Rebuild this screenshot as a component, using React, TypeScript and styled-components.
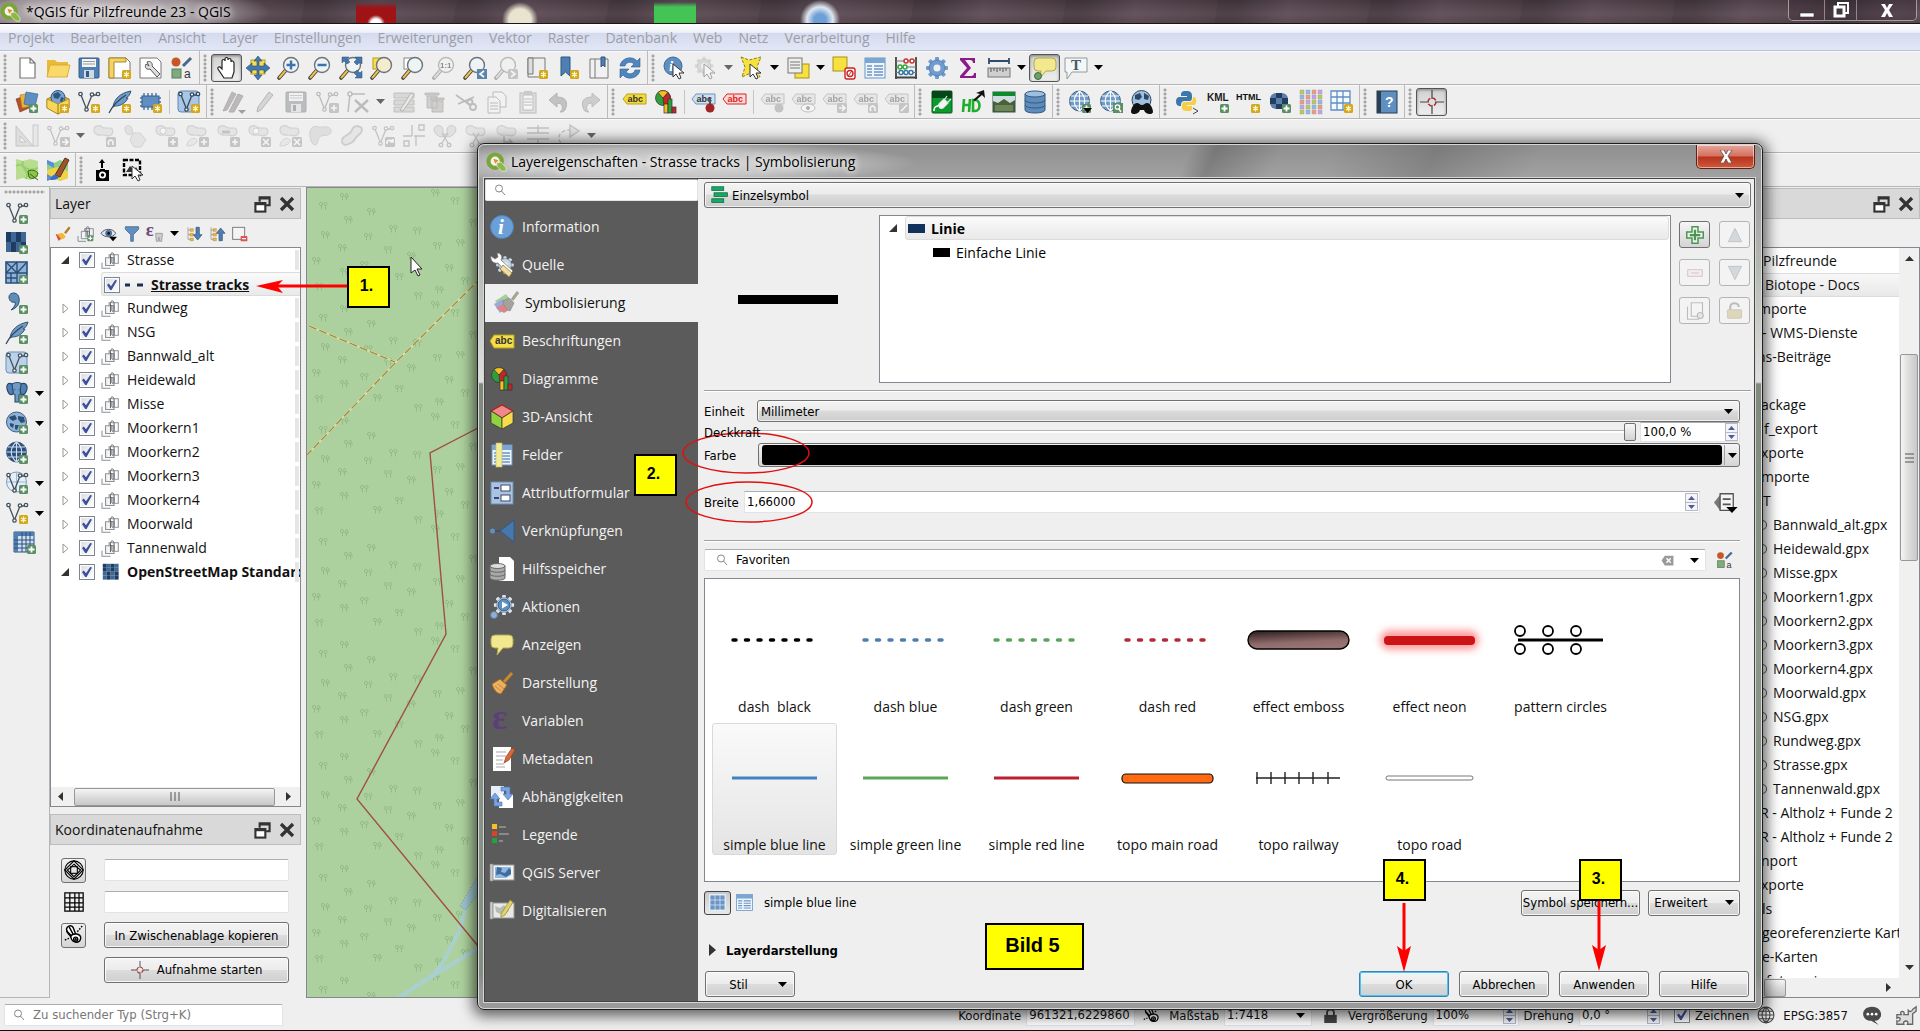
import React, { ReactNode } from 'react';
import styled, { createGlobalStyle, css } from 'styled-components';

const UI = '"Open Sans", "Noto Sans", sans-serif';
const CTRL = '"DejaVu Sans Condensed", "Noto Sans", sans-serif';
const NOTE = '"Liberation Sans", Arial, sans-serif';

const Global = createGlobalStyle`
  * { box-sizing: border-box; }
  body { margin: 0; background: #efefef; font-family: ${UI}; font-size: 14px; color: #111; overflow: hidden; }
  button, input, select { font: inherit; color: inherit; margin: 0; }
  svg { display: block; flex: none; }
`;

/* ---------- icon parts ---------- */
const Plus = () => (
  <g><rect x="14" y="14" width="9" height="9" rx="1.5" fill="#5a8f62" /><path d="M18.500 15.500v6M15.500 18.500h6" stroke="#fff" strokeWidth="1.800" /></g>
);
const Star = () => (
  <g><rect x="14" y="14" width="9" height="9" rx="1.500" fill="#d3a71c" /><path d="M18.500 15.500v6M16 17l5 3M21 17l-5 3" stroke="#fff8d0" strokeWidth="1.300" /></g>
);
const Nodes = ({ c = '#44525c' }: { c?: string }) => (
  <g fill="none" stroke={c} strokeWidth="1.300"><path d="M4 5l5.500 14L15 5h6" /><circle cx="3.500" cy="4" r="1.700" fill="#fff" /><circle cx="15" cy="4.500" r="1.700" fill="#fff" /><circle cx="21" cy="4" r="1.700" fill="#fff" /><circle cx="9.500" cy="19.500" r="1.700" fill="#fff" /></g>
);
const Lens = ({ fill = '#eef3f6' }: { fill?: string }) => (
  <g><path d="M2 22l7-8" stroke="#3b3b3b" strokeWidth="3.600" strokeLinecap="round" /><path d="M2.500 21.500l6-7" stroke="#f0c24a" strokeWidth="2" strokeLinecap="round" /><circle cx="14" cy="9" r="7.500" fill={fill} stroke="#6d7478" strokeWidth="1.400" /></g>
);
const Ball = ({ fill = '#6f9bc6', line = '#fff' }: { fill?: string; line?: string }) => (
  <g><circle cx="11.500" cy="11" r="10" fill={fill} stroke="#3f5e7e" strokeWidth="1" /><path d="M1.500 11h20M3 6h17M3 16h17M11.500 1v20M11.500 1c-7 6-7 14 0 20M11.500 1c7 6 7 14 0 20" fill="none" stroke={line} strokeWidth="1.100" /></g>
);
const Drop = () => <path d="M15 18h9l-4.500 5z" fill="#000" />;
const Blob = () => <path d="M2 6c0-5 6-5 8-3s5 1 8 1 4 5 1 7-6 0-8 0-9 1-9-5z" fill="#d6d6d4" stroke="#a9a9a7" strokeWidth="1.200" />;
const Tag = ({ bg = '#f4d93a', st = '#b9a11a', fg = '#333' }: { bg?: string; st?: string; fg?: string }) => (
  <g><path d="M0 9l4-5h19v10H4z" fill={bg} stroke={st} strokeWidth="1" /><text x="4.500" y="12" fontSize="9" fontWeight="700" fontFamily={NOTE} fill={fg}>abc</text></g>
);
const GreyBadge = ({ d }: { d: string }) => (
  <g><rect x="14" y="13" width="10" height="10" rx="1.500" fill="#8d8d8d" /><path d={d} stroke="#fff" strokeWidth="1.600" fill="none" /></g>
);
const Feather = () => (
  <g><path d="M5 17C6 9 12 3 23 1c-1 4-3 6-5 7l2 0c-2 4-6 8-13 8z" fill="#6f9bc6" stroke="#365472" strokeWidth="1" /><path d="M1 23c4-8 9-13 17-18" fill="none" stroke="#2c4560" strokeWidth="1.200" /></g>
);
const Save = () => (
  <g><rect x="2" y="2" width="20" height="20" rx="1" fill="#4d7fb3" stroke="#365c86" /><rect x="5" y="3" width="14" height="8" fill="#f4f4f4" /><path d="M6 5.500h12M6 8h12" stroke="#999" /><rect x="7" y="14" width="10" height="8" fill="#cfd9e2" /><rect x="9" y="15" width="3" height="6" fill="#365c86" /></g>
);
const Page = () => <path d="M5 2h10l5 5v15H5zM15 2v5h5" fill="#fff" stroke="#777" strokeWidth="1.200" />;
const Trash = () => <path d="M2 3h14v2H2zM4 6h10v12H4zM8 8h13v2H8zM9 11h11v11H9z" fill="#c89a9a" stroke="#8b5a5a" strokeWidth=".8" />;
const Snips = () => <g fill="none" stroke="#888" strokeWidth="1.400"><path d="M9 9l6 10M15 9L9 19" /><circle cx="8" cy="21" r="1.800" /><circle cx="16" cy="21" r="1.800" /></g>;
const Style = () => (
  <g><circle cx="6" cy="6" r="4.500" fill="#c8562a" /><path d="M13 10l8-8" stroke="#47698b" strokeWidth="3" /><rect x="2" y="13" width="9" height="9" fill="#7fa97f" stroke="#568156" /><text x="14" y="22" fontSize="12" fontFamily={NOTE} fill="#333">a</text></g>
);
const Table = () => (
  <g><rect x="2" y="2" width="20" height="20" fill="#eef5fc" stroke="#6b95c4" /><rect x="2" y="2" width="20" height="5" fill="#7ba6d4" /><path d="M4 10h5M4 13h5M4 16h5M4 19h5M11 10h9M11 13h9M11 16h9M11 19h9" stroke="#6b95c4" strokeWidth="1.400" /></g>
);
const GroupIcon = () => (
  <g fill="none" stroke="#8d9296" strokeWidth="1.500"><path d="M0 15v8h12M4 19" /><path d="M5 8v11h12V8z" fill="#f3f3f3" /><path d="M10 8V4h13v12h-6" /><path d="M12 17V5c0-5 5-5 5 0v9c0 3-3 3-3 0V7" stroke="#555b60" strokeWidth="1.300" /></g>
);
const Check = () => (
  <g>{[0, 1, 2, 3].map((r) => [0, 1, 2, 3].map((c) => <rect key={r + '-' + c} x={1 + c * 5} y={1 + r * 5} width="5" height="5" fill={['#1d3d63', '#9fbfe0', '#3f6796', '#dfe9f4'][(r * 3 + c * 2 + (r % 2)) % 4]} />))}</g>
);
const Pie = () => (
  <g stroke="#333" strokeWidth=".7"><circle cx="9" cy="8" r="7.500" fill="#2f9e3a" /><path d="M9 8L4 2.500a7.500 7.500 0 0 1 10 0z" fill="#f6c022" /><path d="M9 8l5-5.500a7.500 7.500 0 0 1-4 13z" fill="#c4252a" /><rect x="10" y="14" width="4" height="9" fill="#f6c022" /><rect x="14" y="9" width="4" height="14" fill="#2f9e3a" /><rect x="18" y="17" width="4" height="6" fill="#c4252a" /></g>
);
const Gear = ({ fill = '#6f9bd0', x = 12, y = 12, k = 1 }: { fill?: string; x?: number; y?: number; k?: number }) => (
  <g transform={`translate(${x} ${y}) scale(${k})`}>
    {[0, 45, 90, 135].map((a) => <rect key={a} x="-2" y="-11" width="4" height="22" rx="1" fill={fill} transform={`rotate(${a})`} />)}
    <circle r="8" fill={fill} stroke="#4c6f9c" strokeWidth=".6" /><circle r="3.500" fill="#efefef" />
  </g>
);
const Bubble = () => <path d="M5 2h14q4 0 4 4v5q0 4-4 4h-6l-6 7 1-7H5q-4 0-4-4V6q0-4 4-4z" fill="#f2e88f" stroke="#b3a84c" />;
const Cross = ({ c = '#b03030' }: { c?: string }) => (
  <g fill="none"><path d="M12 0v9M12 15v9M0 12h9M15 12h9" stroke="#444" strokeWidth="1.200" /><circle cx="12" cy="12" r="4" stroke={c} strokeWidth="1.600" strokeDasharray="4 2.280" /></g>
);
const Pointer = () => <path d="M10 8v13l3-3 3 5 2-1-2-5h5z" fill="#fff" stroke="#333" />;
const Elephant = () => (
  <g stroke="#28476a" strokeWidth="1.100" fill="#6f9bc6"><path d="M7 3c3-2 8-2 10 0 3 3 2 8-1 10l-2 1v7h-4v-7C6 12 4 6 7 3z" /><path d="M7 3C3 1 1 4 2 8s3 7 6 5c1-3-1-6-1-10zM16 3c4-2 7 1 6 5s-3 7-6 5c-2-3 0-6 0-10z" fill="#4f7fb3" /><path d="M10 8v.5M14 8v.5" strokeWidth="1.600" /></g>
);

const ICONS: Record<string, ReactNode> = {
  new: <Page />,
  open: <g><path d="M1 4h8l2 2h11v15H1z" fill="#e9b93a" /><path d="M1 21L4 9h20l-3 12z" fill="#f8d96a" stroke="#d5a52c" strokeWidth=".8" /></g>,
  save: <Save />,
  layout: <g><path d="M1 2h17l4 4v16H1z" fill="#fff" stroke="#777" /><path d="M1 2h17v4H6v16H1z" fill="#f4d263" stroke="#a98a25" /><Star /></g>,
  manager: <g><path d="M1 2h17l4 4v16H1z" fill="#fff" stroke="#777" /><path d="M8 6c4-2 6 2 5 4l8 8-3 3-7-8c-3 1-6-1-4-5l3 2z" fill="#ddd" stroke="#555" /></g>,
  style: <Style />,
  hand: <path d="M7 13V5c0-2 3-2 3 0V3c0-2 3-2 3 0v1c0-2 3-2 3 0v2c0-2 3-1 3 1v9l-2 6H9l-6-9c-1-2 2-3 3-1z" fill="#fff" stroke="#222" strokeWidth="1.200" />,
  pan: <g><rect x="5" y="4" width="14" height="14" fill="#f6df4f" stroke="#b49c1e" /><path d="M12 0l4 5h-3v5h5V7l6 5-6 5v-3h-5v5h3l-4 5-4-5h3v-5H6v3l-6-5 6-5v3h5V5H8z" fill="#4577ab" stroke="#2a4f78" strokeWidth=".6" /></g>,
  zin: <g><Lens /><path d="M14 4.500v9M9.500 9h9" stroke="#3d73ab" strokeWidth="2.500" /></g>,
  zout: <g><Lens /><path d="M9.500 9h9" stroke="#3d73ab" strokeWidth="2.500" /></g>,
  zfull: <g><Lens /><path d="M3 1h7L8 3l3 3-3 2-3-3-2 2zM23 1v7l-2-2-3 3-3-3 3-3-2-2zM23 22h-7l2-2-3-3 3-3 3 3 2-2z" fill="#4577ab" stroke="#2a4f78" strokeWidth=".5" /></g>,
  zsel: <g><rect x="3" y="2" width="12" height="11" fill="#f6df4f" stroke="#b49c1e" /><Lens fill="#f3ecd0" /></g>,
  zlayer: <g><rect x="3" y="2" width="12" height="11" fill="#fff" stroke="#888" /><Lens /></g>,
  z11: <g><Lens /><text x="8" y="12" fontSize="8" fontWeight="700" fontFamily={NOTE}>1:1</text></g>,
  zlast: <g><Lens /><rect x="14" y="13" width="10" height="10" fill="#5b86ab" /><path d="M21 15l-4 3 4 3" stroke="#fff" strokeWidth="1.600" fill="none" /></g>,
  znext: <g><Lens /><GreyBadge d="M17 15l4 3-4 3" /></g>,
  newmap: <g><path d="M3 2h17v19H3z" fill="#eee" stroke="#777" /><path d="M3 2h5v16H3z" fill="#ddd" stroke="#777" /><Star /></g>,
  bookmark: <g><path d="M5 1h9v19l-4.500-4L5 20z" fill="#4d7fb3" stroke="#2f567f" /><Star /></g>,
  bookmarks: <g><path d="M3 3h18v19H3z" fill="#f1f1f1" stroke="#777" /><path d="M14 1v10l2-2 2 2V1z" fill="#4d7fb3" stroke="#2f567f" /><path d="M8 3v19" stroke="#777" /></g>,
  refresh: <g fill="#4f86c0" stroke="#2d5d90" strokeWidth=".6"><path d="M2 10C3 2 14-1 19 5l3-3v9h-9l3-3c-3-3-8-2-9 2z" /><path d="M22 14c-1 8-12 11-17 5l-3 3v-9h9l-3 3c3 3 8 2 9-2z" /></g>,
  identify: <g><circle cx="10" cy="10" r="9" fill="#5e8fc0" stroke="#3d6a99" /><text x="6" y="15" fontSize="15" fontStyle="italic" fontWeight="700" fontFamily='"Liberation Serif", serif' fill="#fff">i</text><Pointer /></g>,
  action: <g><Gear fill="#bbb" x={10} y={10} k={0.85} /><Pointer /></g>,
  select: <g><path d="M1 1l8 3 12-3-4 10 3 10-9-4-9 4 3-10z" fill="#f6e13f" stroke="#8c7c18" strokeDasharray="3 1.500" /><Pointer /></g>,
  form: <g><rect x="9" y="8" width="14" height="14" fill="#f6e13f" stroke="#a7931c" /><rect x="2" y="2" width="14" height="15" fill="#eee" stroke="#777" /><path d="M4 6h10M4 9h10M4 12h10" stroke="#777" /></g>,
  deselect: <g><rect x="1" y="1" width="14" height="14" fill="#f6e13f" stroke="#a7931c" /><rect x="13" y="12" width="10" height="11" rx="2" fill="#fff" stroke="#c22" strokeWidth="1.400" /><circle cx="18" cy="17.500" r="3" fill="none" stroke="#c22" strokeWidth="1.400" /><path d="M16 20l4-5" stroke="#c22" /></g>,
  table: <Table />,
  abacus: <g fill="none"><path d="M2 1v22M22 1v22M1 21.500h22" stroke="#444" strokeWidth="1.800" /><path d="M2 5h20M2 11h20M2 16.500h20" stroke="#777" /><g strokeWidth="1.500" fill="#fff"><circle cx="12" cy="5" r="2" stroke="#c33" /><circle cx="18" cy="5" r="2" stroke="#c33" /><circle cx="6" cy="11" r="2" stroke="#3a3" /><circle cx="11" cy="11" r="2" stroke="#3a3" /><circle cx="7" cy="16.500" r="2" stroke="#37a" /><circle cx="12" cy="16.500" r="2" stroke="#37a" /><circle cx="17" cy="16.500" r="2" stroke="#37a" /></g></g>,
  gear: <Gear />,
  sigma: <path d="M4 2h15v5h-2c0-2-1-3-3-3H9l6 8-7 8h7c2 0 3-1 3-3h2v5H4v-2l7-8-7-8z" fill="#8b1a8b" />,
  ruler: <g><path d="M2 5h20M2 2v6M22 2v6" stroke="#2f4c6d" strokeWidth="1.800" /><rect x="1" y="12" width="22" height="9" fill="#cfcfcf" stroke="#777" /><path d="M4 12v4M7 12v3M10 12v4M13 12v3M16 12v4M19 12v3" stroke="#555" /></g>,
  tips: <g><Bubble /><circle cx="5" cy="20" r="3.500" fill="#6fa06a" stroke="#3e6c3a" /></g>,
  text: <g><path d="M1 2h22v14H8l-5 7V16H1z" fill="#f4f7f8" stroke="#909a9e" /><text x="7" y="14" fontSize="15" fontWeight="700" fontFamily='"Liberation Serif", serif' fill="#4b5a64">T</text></g>,
  dsm: <g><path d="M1 9l9-3 4 12-9 4z" fill="#b3502d" stroke="#7a341b" strokeWidth=".6" /><path d="M5 5l11-2 1 13-10 2z" fill="#e8b33a" stroke="#a57a1c" strokeWidth=".6" /><path d="M11 2l12 2-3 13-11-3z" fill="#5f8fc2" stroke="#365c86" strokeWidth=".6" /><Plus /></g>,
  geopkg: <g><path d="M1 9l11-5 11 5v9l-11 6-11-6z" fill="#e3b92f" stroke="#a7831c" /><circle cx="12" cy="7.500" r="7" fill="#7aa3cf" stroke="#2f567f" /><path d="M7 4l5-2 3 3-3 4-4-1zM15 7l3 1-2 5-2-2z" fill="#2f567f" /><path d="M1 9l11 5v10L1 18zM23 9l-11 5v10l11-6z" fill="#f6d75c" stroke="#a7831c" strokeWidth=".7" /><Star /></g>,
  newshape: <g><Nodes /><Star /></g>,
  newspat: <g><Feather /><Star /></g>,
  mem: <g><path d="M5 3v17M9 3v17M13 3v17M17 3v17M1 8h21M1 12h21M1 16h21" stroke="#4675a6" strokeWidth="1.400" /><rect x="3" y="6" width="17" height="11" fill="#5f8fc2" stroke="#365c86" /><Star /></g>,
  virt: <g><rect x="1" y="1" width="21" height="21" rx="3" fill="#a9c6e6" stroke="#5f87b0" /><Nodes c="#33485c" /><Star /></g>,
  pencils: <g><path d="M1 21L10 2l4 2L5 20zM7 22l9-18 5 2-9 16z" fill="#8a6a64" stroke="#6b544e" /><path d="M16 20h8l-4 4z" fill="#333" /></g>,
  pencil: <path d="M4 22l1-5L16 2l4 3L8 20z" fill="#b9b39c" stroke="#6d6752" />,
  vplus: <g><Nodes c="#777" /><GreyBadge d="M19 15v6M16 18h6" /></g>,
  vtool: <g fill="none" stroke="#777" strokeWidth="1.500"><path d="M4 4h15M4 4l-2 18" /><path d="M9 10l13 12M22 10L9 22" strokeWidth="2.400" /><circle cx="4" cy="4" r="2" fill="#fff" /></g>,
  multi: <g><path d="M2 3h20v5H2zM2 10h20v5H2zM2 17h20v5H2z" fill="#b5bda2" stroke="#7d8567" /><path d="M8 20L19 3l3 2L11 21z" fill="#ddd" stroke="#666" /></g>,
  trash: <Trash />,
  cut: <g fill="none" stroke="#777" strokeWidth="1.800"><path d="M2 5l14 10M4 14L20 7" /><circle cx="19" cy="17" r="3" /><circle cx="16" cy="12" r="2.500" /></g>,
  copy: <g fill="#f5f5f5" stroke="#777"><path d="M8 2h9l4 4v11H8z" /><path d="M3 7h8l4 4v12H3z" /><path d="M5 13h8M5 16h8M5 19h8" /></g>,
  paste: <g><rect x="4" y="3" width="16" height="20" fill="#ccc" stroke="#777" /><path d="M7 5h10v15H7z" fill="#fff" stroke="#777" /><rect x="8" y="1" width="8" height="4" fill="#999" /><path d="M8 9h8M8 12h8M8 15h8" stroke="#777" /></g>,
  undo: <path d="M2 10l8-7v4c8 0 12 4 8 13-1 2-4 2-5 2 4-3 3-9-3-9v4z" fill="#a5806f" stroke="#7a5d50" />,
  redo: <path d="M22 10l-8-7v4C6 7 2 11 6 20c1 2 4 2 5 2-4-3-3-9 3-9v4z" fill="#8fa68f" stroke="#657a65" />,
  label: <Tag />,
  diagram: <Pie />,
  pinlabel: <g><Tag bg="#cfe0f3" st="#6d92bd" /><path d="M18 8v7" stroke="#555" strokeWidth="2" /><circle cx="18" cy="18" r="4.500" fill="#a32424" /></g>,
  redlabel: <Tag bg="#fbdada" st="#e02020" fg="#e02020" />,
  gl1: <g><Tag bg="#ddd" st="#888" /><circle cx="18" cy="18" r="4.500" fill="#888" /></g>,
  gl2: <g><Tag bg="#ddd" st="#888" /><ellipse cx="16" cy="18" rx="7" ry="4" fill="#fff" stroke="#777" /><circle cx="16" cy="18" r="2" fill="#555" /></g>,
  gl3: <g><Tag bg="#ddd" st="#888" /><GreyBadge d="M16 18h6M19 15l3 3-3 3" /></g>,
  gl4: <g><Tag bg="#ddd" st="#888" /><GreyBadge d="M17 21c-3-5 4-7 4-2v2" /></g>,
  gl5: <g><Tag bg="#ddd" st="#888" /><GreyBadge d="M16 21l6-6" /></g>,
  plug: <g><rect x="2" y="1" width="20" height="22" rx="1" fill="#0c9a2c" stroke="#045a17" /><rect x="2" y="1" width="20" height="7" fill="#05471a" /><path d="M4 21c0-7 4-3 6-7" stroke="#fff" strokeWidth="1.600" fill="none" /><path d="M9 14l5-5 4 4-5 5c-3 1-5-1-4-4zM15 9l2-3M18 12l3-3" fill="#f4f4f4" stroke="#e8e8e8" strokeWidth="1.200" /></g>,
  hd: <g><path d="M3 9l-1 13M2 15h6M9 9L8 22" fill="none" stroke="#1fae2c" strokeWidth="2.600" /><path d="M12 10v11h2c6 0 6-11 0-11z" fill="none" stroke="#1fae2c" strokeWidth="2.600" /><path d="M12 10l7-6-4-1 8-3 1 8-3-3-7 6z" fill="#111" /></g>,
  photo: <g><rect x="1" y="2" width="22" height="20" fill="#4a6138" stroke="#355" /><rect x="1" y="2" width="22" height="4" fill="#0d8a2c" /><path d="M1 6h22v4l-5 3-6-4-6 4-5-2z" fill="#cfdde0" /><path d="M3 15h18v6H3z" fill="#6f8557" /></g>,
  db: <g fill="#5d8bbb" stroke="#35597f"><path d="M2 4v16c0 4 20 4 20 0V4z" /><path d="M2 10c0 4 20 4 20 0M2 15c0 4 20 4 20 0" fill="none" /><ellipse cx="12" cy="4" rx="10" ry="3" fill="#9dbfe0" /></g>,
  globeplus: <g><Ball /><Plus /><Drop /></g>,
  globesearch: <g><Ball /><rect x="14" y="13" width="10" height="10" fill="#5a8f62" /><circle cx="18.500" cy="17" r="2.200" fill="none" stroke="#fff" strokeWidth="1.300" /><path d="M20 19l2 3" stroke="#fff" strokeWidth="1.400" /></g>,
  globebin: <g><circle cx="11.500" cy="10" r="9.500" fill="#9fbfe0" stroke="#2c4866" /><path d="M5 5l5-2 2 4-3 3-4-1zM14 3l5 3-1 4-4-1z" fill="#2c4866" /><path d="M1 22c0-4 3-9 6-9 2 0 3 2 5 2s3-2 5-2c3 0 6 5 6 9 0 3-8 3-9-2h-4c-1 5-9 5-9 2z" fill="#111" /></g>,
  python: <g><path d="M11 1c-5 0-5 2-5 5h6v1H4c-4 0-4 9 0 9h2c0-4 1-5 4-5h4c3 0 3-2 3-5s-1-5-6-5z" fill="#3b77a8" /><path d="M13 21c5 0 4-2 4-5h-5v-1h7c3 0 3-8 0-8h-1c0 4-1 5-4 5h-4c-3 0-3 2-3 5s1 4 6 4z" fill="#f7cf46" /><path d="M18 18l5 3-5 3" fill="none" stroke="#444" /></g>,
  kml: <g><text x="1" y="11" fontSize="10" fontWeight="700" fontFamily={NOTE} fill="#222">KML</text><Plus /></g>,
  html: <g><text x="-1" y="10" fontSize="9" fontWeight="700" fontFamily={NOTE} fill="#111">HTML</text><Star /></g>,
  rasterplus: <g><rect x="2" y="3" width="18" height="16" rx="6" fill="#5b7fa8" /><path d="M8 3h6v5H8zM2 8h6v6H2zM14 8h6v6h-6zM8 14h6v5H8z" fill="#223f63" /><Plus /></g>,
  tiles: <g>{[0, 1, 2, 3, 4].map((r) => [0, 1, 2, 3].map((c) => <rect key={r + '_' + c} x={1 + c * 6} y={r * 5} width="4" height="4" fill={['#b6cc5a', '#8fb8ea', '#f09a7a', '#c9a0e8'][(r + c) % 4]} stroke="#999" strokeWidth=".4" />))}</g>,
  gridnew: <g><path d="M1 1h19v19H1zM1 7h19M1 13h19M7 1v19M13 1v19" fill="#f5f9fd" stroke="#5f8fc2" strokeWidth="1.300" /><Star /></g>,
  book: <g><rect x="2" y="1" width="20" height="22" fill="#5e8fc0" stroke="#263a50" /><rect x="2" y="1" width="4" height="22" fill="#2b3e52" /><text x="10" y="17" fontSize="14" fontWeight="700" fontFamily={NOTE} fill="#fff">?</text></g>,
  cross: <Cross />,
  tri: <g><path d="M1 2v20h17zM5 12v6h6z" fill="#c9c9c4" stroke="#8c8c88" fillRule="evenodd" /><rect x="18" y="1" width="5" height="21" fill="#ddd" stroke="#999" /></g>,
  vmove: <g><Nodes c="#888" /><GreyBadge d="M16 18h6M19 15l3 3-3 3" /></g>,
  b1: <g><Blob /><GreyBadge d="M17 21c-3-5 4-7 4-2v2" /></g>,
  b2: <g><path d="M2 3c5-4 9 2 7 6s-8 1-7-6z" fill="#ccc" stroke="#aaa" /><path d="M10 9h7l6 7-5 7h-7l-4-7z" fill="#d3d3d3" stroke="#aaa" /></g>,
  b3: <g><Blob /><circle cx="9" cy="7" r="3" fill="#fff" stroke="#aaa" /><GreyBadge d="M19 15v6M16 18h6" /></g>,
  b4: <g><Blob /><path d="M2 22c0-6 6-9 9-7s0 7-9 7z" fill="#ddd" stroke="#aaa" /><GreyBadge d="M19 15v6M16 18h6" /></g>,
  b5: <g><Blob /><path d="M6 8h8" stroke="#888" strokeWidth="3" /><GreyBadge d="M19 15v6M16 18h6" /></g>,
  b6: <g><Blob /><circle cx="9" cy="7" r="3" fill="#fff" stroke="#aaa" /><GreyBadge d="M16 15l6 6M22 15l-6 6" /></g>,
  b7: <g><Blob /><path d="M2 22c0-6 6-9 9-7s0 7-9 7z" fill="#ddd" stroke="#aaa" /><GreyBadge d="M16 15l6 6M22 15l-6 6" /></g>,
  b8: <path d="M2 5c3-5 8-1 12-2s9 1 8 5-6 3-10 4-2 9-6 9-7-11-4-16z" fill="#c9c9c6" stroke="#a5a5a3" />,
  b9: <path d="M2 18c-1-7 8-6 10-12s10-4 10 0-5 5-7 9-12 9-13 3z" fill="#d9d9d4" stroke="#9d9d9a" strokeWidth="1.800" />,
  b10: <g><Nodes c="#888" /><GreyBadge d="M16 20c-1-4 5-5 6-2M22 15v3h-3" /></g>,
  b11: <g fill="none" stroke="#888" strokeWidth="1.400"><path d="M10 1v11M14 22V12M1 12h9M12 12h11M17 1h5v5h-5zM2 17h5v5H2z" /></g>,
  b12: <g><path d="M1 6c0-6 9-6 9 0s2 2 2 5-9 3-11-5zM23 6c0-6-9-6-9 0s-2 2-2 5 9 3 11-5z" fill="#ccc" stroke="#999" /><Snips /></g>,
  b13: <g><Blob /><Snips /></g>,
  b14: <g><Blob /><path d="M9 12v6h8l-3-3M17 18l-3 3" stroke="#888" strokeWidth="1.500" fill="none" /></g>,
  b15: <g fill="none" stroke="#888" strokeWidth="1.400"><path d="M1 4h22M1 9h22M1 15h22M1 20h22M12 1v8M12 15v8" /></g>,
  b16: <g fill="none" stroke="#888" strokeWidth="1.400"><path d="M9 22c-12-5-8-16 4-16" strokeDasharray="4 2" /><path d="M13 1l9 6-9 6z" fill="#ccc" /></g>,
  osm1: <g><path d="M1 1l7 2 7-2 8 2v16l-8 3-7-2-7 2z" fill="#b9dd8f" /><path d="M1 8c8-5 8 8 22 2M8 3c-3 8 7 8 3 18" stroke="#95cf70" fill="none" strokeWidth="2" /><path d="M13 13c5-2 8 0 10 2-1 5-6 7-9 4zM23 22l-8-6" fill="#8fc34a" stroke="#2f6414" /></g>,
  osm2: <g><path d="M1 2l7 3 6-3 8 3v15l-8 3-6-3-7 3z" fill="#8fcf83" /><path d="M1 12l10-3 11 4v7l-8 3-6-3-7 3z" fill="#f0d24a" /><path d="M1 16l7 4-7 3zM1 2l7 3v5L1 6z" fill="#5a8fd8" /><path d="M9 17L19 0l4 2-9 17z" fill="#a0522d" stroke="#532" /><path d="M4 22c1-4 4-6 6-5l3 2c-2 3-5 3-9 3z" fill="#3a6fc0" /></g>,
  cam: <g fill="#000"><path d="M11 1l3 4h-2v5h-2V5H8z" /><path d="M5 12h4v-1h5v1h4v11H5z" /><circle cx="11.500" cy="17" r="3.500" fill="#fff" /><circle cx="11.500" cy="17" r="1.800" /></g>,
  snap: <g><rect x="2" y="2" width="16" height="15" fill="none" stroke="#000" strokeWidth="2.400" strokeDasharray="4 1.500" /><path d="M4 14l4-6 4 4 2-3 3 5z" fill="#333" /><Pointer /></g>,
  // layer toolbars
  addv: <g><Nodes /><Plus /></g>,
  addr: <g><Check /><Plus /></g>,
  addmesh: <g><path d="M1 1h21v21H1z" fill="#8fb2d8" stroke="#2c4f78" strokeWidth="1.600" /><path d="M1 12h21M12 1v21M1 1l11 11M12 1L1 12M22 1L12 12M1 17h11M6 12v10" stroke="#2c4f78" fill="none" strokeWidth="1.400" /><Plus /></g>,
  addcsv: <g><path d="M4 6c0-5 9-6 10 1 1 6-2 10-8 12 3-3 5-5 4-8-3 1-6-1-6-5z" fill="#5f8cb8" stroke="#2c4f78" /><Plus /></g>,
  addspat: <g><Feather /><Plus /></g>,
  addvirt: <g><rect x="1" y="1" width="21" height="21" rx="3" fill="#bcd2ea" stroke="#6b8fb5" /><Nodes /><Plus /></g>,
  addpg: <g><Elephant /><Plus /></g>,
  addwms: <g><circle cx="11.500" cy="11" r="10" fill="#8fb2d8" stroke="#3f5e7e" /><path d="M4 6l6-2 2 4-4 2-3-2zM13 5l6 1 1 5-4 1-3-4zM5 12l4 1-1 4-3-2zM10 14l4 0-2 5-2-1z" fill="#2c4f78" /><Plus /></g>,
  addwcs: <g><Ball fill="#2c4f78" line="#cfe0f3" /><Plus /></g>,
  addwfs: <g><circle cx="11.500" cy="11" r="10" fill="#e6eef7" stroke="#7b9cbf" /><path d="M1.500 11h20M11.500 1v20" stroke="#9db8d4" /><Nodes /><Plus /></g>,
  addtab: <g><path d="M1 1h20v20H1z" fill="#cfe0f3" stroke="#2c4f78" /><path d="M1 1h20v4H1zM1 1h4v20H1z" fill="#4f7fb3" /><path d="M1 9h20M1 13h20M1 17h20M9 1v20M13 1v20M17 1v20" stroke="#2c4f78" /><Plus /></g>,
  brush: <g><path d="M22 2l-8 9" stroke="#c98a2c" strokeWidth="3" /><path d="M2 13l8-5 7 6-6 9c-4 0-8-5-9-10z" fill="#e8b060" stroke="#9a661c" /><path d="M5 15l6 5M8 13l6 5" stroke="#c98a3c" /></g>,
  brush2: <g><path d="M22 2l-7 9" stroke="#b77b2c" strokeWidth="3.500" /><path d="M1 12c5 1 7-3 11-1l4 5c-3 5-8 3-10 6z" fill="#f0b93a" /><path d="M1 12c4 1 4 3 8 7l-4 3z" fill="#d9534f" /></g>,
  group: <g><GroupIcon /><Plus /></g>,
  grp: <GroupIcon />,
  eye: <g><path d="M0 11c5-8 18-8 22 0-4 7-17 7-22 0z" fill="#dfe7ee" stroke="#556" strokeWidth="1.500" /><circle cx="11.500" cy="11" r="5" fill="#4d6f96" /><circle cx="11.500" cy="11" r="2" fill="#111" /><path d="M12 16h12l-6 7z" fill="#000" /></g>,
  filter: <path d="M2 1h20v4l-8 8v10h-4V13L2 5z" fill="#5e8fc0" stroke="#35597f" />,
  expr: <g><text x="-2" y="15" fontSize="28" fontWeight="700" fontFamily='"Liberation Serif", serif' fill="#6f4a7d">ε</text><path d="M13 11h10v3l-1 9h-3l-1-6-1 6h-3z" fill="#ccc" stroke="#888" /></g>,
  exp: <g><path d="M3 2v18M3 6h7M3 13h7M3 20h7" stroke="#888" fill="none" /><path d="M6 4h5v4H6zM6 11h5v4H6zM6 18h5v4H6z" fill="#f0b84a" stroke="#a77a1c" strokeWidth=".6" /><path d="M15 2h5v11h4l-6.500 8-6.500-8h4z" fill="#4f7fb3" stroke="#2c4f78" /></g>,
  col: <g><path d="M3 2v18M3 6h7M3 13h7M3 20h7" stroke="#888" fill="none" /><path d="M6 4h5v4H6zM6 11h5v4H6zM6 18h5v4H6z" fill="#f0b84a" stroke="#a77a1c" strokeWidth=".6" /><path d="M15 22h5V11h4L17.500 3 11 11h4z" fill="#4f7fb3" stroke="#2c4f78" /></g>,
  remove: <g><rect x="1" y="2" width="18" height="18" fill="#f4f4f4" stroke="#777" strokeWidth="1.400" /><rect x="13" y="15" width="10" height="8" rx="1" fill="#d9534f" /><path d="M15 19h6" stroke="#fff" strokeWidth="1.800" /></g>,
  osm: <Check />,
  // properties pages
  info: <g><circle cx="12" cy="12" r="11.500" fill="#6a9fd8" stroke="#4f83bb" /><text x="8" y="19" fontSize="21" fontStyle="italic" fontWeight="700" fontFamily='"Liberation Serif", serif' fill="#fff">i</text></g>,
  source: <g><Gear fill="#c9d6e2" x={15} y={12} k={0.8} /><path d="M1 3l4 3 3-2-1-4c4 0 6 4 4 7l12 11-4 4L8 10C4 11 0 8 1 3z" fill="#fff" stroke="#777" strokeWidth=".8" /><path d="M13 12l9 8-3 4-9-8z" fill="#f0dca0" stroke="#8f7a3a" strokeWidth=".8" /></g>,
  symb: <g><path d="M2 10L13 3l7 9-9 8z" fill="#a5cf98" /><path d="M1 13l9-5 6 7-9 7z" fill="#96a9de" /><path d="M3 17l7-4 6 6-5 3z" fill="#dd8585" /><path d="M25 1l-6 8" stroke="#a5a58f" strokeWidth="3" /><path d="M10 10l6-3 5 5-4 8c-3-1-7-5-7-10z" fill="#a2a39c" stroke="#7d7e78" strokeWidth=".6" /></g>,
  labels: <g><path d="M0 12l4-6h20v13H4z" fill="#f4dc4a" stroke="#b9a11a" /><text x="5" y="15" fontSize="10" fontWeight="700" fontFamily={NOTE} fill="#333">abc</text></g>,
  cube: <g stroke="#333" strokeWidth=".7"><path d="M12 0l11 6-11 7L1 6z" fill="#f08a8a" stroke="#b02020" strokeWidth="1.200" /><path d="M1 6l11 7v11L1 18z" fill="#8fd33f" /><path d="M23 6l-11 7v11l11-6z" fill="#f4dc4a" /></g>,
  fields: <g><Table /><rect x="6" y="0" width="6" height="24" fill="#f2eb9a" stroke="#c5bb55" strokeWidth=".6" /></g>,
  aform: <g><rect x="1" y="1" width="22" height="22" fill="#a9c4e2" stroke="#6b8fb5" /><rect x="11" y="4" width="9" height="6" fill="#fff" stroke="#446" /><rect x="11" y="14" width="9" height="6" fill="#fff" stroke="#446" /><path d="M4 7h5M4 17h5" stroke="#446" strokeWidth="2" /></g>,
  join: <g><path d="M10 12L24 1v22z" fill="#4678ad" stroke="#315a86" /><circle cx="2.500" cy="12" r="2.500" fill="#5f8fc2" /><path d="M5 12h5" stroke="#35506e" strokeWidth="1.500" /></g>,
  aux: <g><path d="M9 0h11l4 4v20H9z" fill="#fff" /><g fill="#a9a9a9" stroke="#666"><path d="M0 9v12c0 3 15 3 15 0V9z" /><path d="M0 13c0 3 15 3 15 0M0 17c0 3 15 3 15 0" fill="none" /><ellipse cx="7.500" cy="9" rx="7.500" ry="2.500" fill="#ddd" /></g></g>,
  actions: <g><Gear fill="#dfe7ee" x={14} y={10} k={0.92} /><circle cx="14" cy="10" r="6" fill="#5e8fc0" stroke="#35597f" /><path d="M12 6.500l6 3.500-6 3.500z" fill="#fff" /><circle cx="4" cy="20" r="3.500" fill="#8fb0d3" stroke="#5a7da3" /></g>,
  tip: <Bubble />,
  eps: <text x="2" y="20" fontSize="36" fontWeight="700" fontFamily='"Liberation Serif", serif' fill="#5b3f78">ε</text>,
  meta: <g><path d="M3 0h18v24H3z" fill="#fff" /><path d="M6 5h10M6 9h10M6 13h7M6 17h8M6 20h9" stroke="#aaa" strokeWidth="1.200" /><path d="M14 16l2-6 6-9 3 2-6 10z" fill="#d9693a" stroke="#933f1a" strokeWidth=".7" /></g>,
  deps: <g><rect x="1" y="1" width="13" height="13" fill="#e8eef5" /><rect x="9" y="9" width="14" height="14" fill="#fff" /><path d="M11 2h9v7h3l-5 6-5-6h3V6h-5zM4 21v-7H0l5-6 5 6H7v3h5v4z" fill="#7ba3e0" stroke="#4a73b3" strokeWidth=".6" /></g>,
  legend: <g><rect x="2" y="1" width="5" height="5" fill="#f6c022" /><rect x="2" y="8" width="5" height="5" fill="#d8432a" /><rect x="2" y="15" width="5" height="5" fill="#2f9e3a" /><path d="M9 4h7M9 11h10M9 18h4" stroke="#999" strokeWidth="1.500" /></g>,
  server: <g><path d="M0 3h3v17H0z" fill="#ccc" stroke="#888" strokeWidth=".6" /><rect x="3" y="4" width="21" height="15" fill="#f4f4f4" stroke="#999" /><path d="M5 6h16v8l-5 3H5z" fill="#8fb8e0" /><path d="M7 6l5 1-1 4 4 1 4-5 2 2v4l-5 3-6-3-4 1z" fill="#3f6d9e" /></g>,
  digit: <g><path d="M0 3h3v17H0z" fill="#ccc" stroke="#888" strokeWidth=".6" /><rect x="3" y="4" width="21" height="15" fill="#e8e8e4" stroke="#999" /><path d="M5 7l5 2 4-3 5 6-6 4-7-3z" fill="#b8bdb4" /><path d="M11 15l9-14 3 2-8 13-4 2z" fill="#e3d46a" stroke="#8f8334" strokeWidth=".7" /></g>,
  // misc
  search: <g fill="none" stroke="#888" strokeWidth="2"><circle cx="10" cy="9" r="7" /><path d="M15 14l7 8" /></g>,
  single: <g fill="#16a866" stroke="#0c6b40"><rect x="1" y="1" width="16" height="5" /><rect x="4" y="9" width="18" height="5" /><rect x="1" y="17" width="16" height="5" /></g>,
  plusbig: <g><path d="M8 1h8v7h7v8h-7v7H8v-7H1V8h7z" fill="#eaf5ea" stroke="#4f9457" strokeWidth="2" /><path d="M12 5v14M5 12h14" stroke="#4f9457" strokeWidth="3" /></g>,
  up: <path d="M12 2l10 20H2z" fill="#c2c7cb" stroke="#8b9196" />,
  down: <path d="M12 22L2 2h20z" fill="#c2c7cb" stroke="#8b9196" />,
  minus: <g><rect x="1" y="7" width="22" height="10" rx="1" fill="#f5eaea" stroke="#cfb6b6" strokeWidth="2" /><path d="M6 12h12" stroke="#cfb6b6" strokeWidth="2" /></g>,
  dup: <g fill="#f6f6f6" stroke="#999" strokeWidth="1.500"><path d="M2 6v17h15v-3" /><path d="M7 1h15v18H7z" /><circle cx="19" cy="18" r="4" fill="#ddd" /></g>,
  lock: <g><path d="M6 11V7c0-7 12-7 12 0" fill="none" stroke="#999" strokeWidth="3" /><rect x="2" y="11" width="20" height="12" rx="1" fill="#cfc49a" stroke="#aaa07a" /></g>,
  data: <g><path d="M0 12l7-9v18z" fill="#777" /><path d="M7 2h15v19H7z" fill="#f5f5f5" stroke="#555" strokeWidth="1.500" /><path d="M10 8h9M10 14h9" stroke="#555" strokeWidth="2" /><path d="M14 17h13l-6.500 7z" fill="#000" /></g>,
  clear: <g><path d="M1 12l6-9h16v18H7z" fill="#9a9a9a" /><path d="M10 8l8 8M18 8l-8 8" stroke="#fff" strokeWidth="2.500" /></g>,
  tilesv: <g><rect x="0" y="0" width="24" height="24" fill="#e2edf8" /><g fill="#6b95c4">{[2, 9, 16].map((y) => [2, 9, 16].map((x) => <rect key={x + '.' + y} x={x} y={y} width="6" height="6" />))}</g></g>,
  globe1: <g fill="none" stroke="#000" strokeWidth="1.300"><circle cx="12" cy="12" r="11" /><path d="M12 1l11 11-11 11L1 12zM12 5l4 4 4 3-4 4-4 4-4-4-4-4 4-3z" /><rect x="8" y="8" width="8" height="8" /></g>,
  grid: <path d="M1 1h22v22H1zM7 1v22M13 1v22M18 1v22M1 7h22M1 13h22M1 18h22" fill="none" stroke="#000" strokeWidth="1.500" />,
  mouse: <g fill="#fff" stroke="#000" strokeWidth="1.700"><path d="M3 5c1-5 6-5 8-2l3 8-5 4-5-6z" /><path d="M6 2l6 11M3 7l7 7" /><path d="M8 14c2-5 13-4 12 2s-10 7-12-2z" /><circle cx="14" cy="17" r="2.500" /><circle cx="14" cy="17" r=".6" fill="#000" /><path d="M16 8l6-7M1 18l5-2" strokeDasharray="2 1.500" /></g>,
  padlock: <g fill="#444"><path d="M5 12V7c0-8 14-8 14 0v5h-3V7c0-4-8-4-8 0v5z" /><rect x="2" y="11" width="20" height="13" /></g>,
  globe2: <g fill="none" stroke="#444" strokeWidth="1.400"><circle cx="12" cy="12" r="10.500" /><path d="M1.500 12h21M3 7h18M3 17h18M12 1.500v21M12 1.500c-7 6-7 15 0 21M12 1.500c7 6 7 15 0 21" /></g>,
  chat: <g><path d="M12 2c14 0 14 17 3 17l5 5-9-5C-2 19-2 2 12 2z" fill="#4a4a4a" /><circle cx="7" cy="11" r="1.600" fill="#fff" /><circle cx="12" cy="11" r="1.600" fill="#fff" /><circle cx="17" cy="11" r="1.600" fill="#fff" /></g>,
  puzzle: <path d="M1 11h5c-3-5 5-5 3 0h5V6c2 2 4 2 5-1l4-3v5l-4 3v12h-6c3-5-6-5-4 0H1v-4c5 2 5-6 0-3z" fill="#ddd" stroke="#666" strokeWidth="1.500" />,
  qgis: <g><circle cx="11" cy="11" r="8" fill="#f1f4e6" stroke="#7ba53a" strokeWidth="5" /><path d="M13 13l5-1 6 7v4h-5l-6-6z" fill="#8fb84a" stroke="#eef3e0" strokeWidth=".8" /><path d="M9 8l6 2-4 4z" fill="#e8893a" /></g>,
  undock: <g fill="none" stroke="#333" strokeWidth="3"><path d="M8 8V2h14v11h-5M7 3.500h15" /><rect x="2" y="10" width="14" height="12" fill="#fff" /><path d="M2 11.500h14" /></g>,
  close: <path d="M3 3l18 18M21 3L3 21" stroke="#333" strokeWidth="5" />,
};

const Icon = ({ n, s = 24 }: { n: string; s?: number }) => (
  <svg width={s} height={s} viewBox="0 0 24 24" overflow="visible" aria-hidden="true">{ICONS[n]}</svg>
);

/* ---------- shell ---------- */
const Shell = styled.div`
  position: relative; height: 100vh; display: flex; flex-direction: column;
  background: #efefef; border-bottom: 1px solid #111; overflow: hidden;
`;
const TitleBar = styled.header`
  flex: none; height: 24px; display: flex; align-items: center; gap: 6px; border-bottom: 1px solid #1b1418;
  background:
    radial-gradient(ellipse 170px 30px at 100px 12px, rgba(225,220,222,.85), rgba(215,210,212,.6) 60%, transparent),
    radial-gradient(circle at 376px 24px, #fff 0 5px, transparent 9px),
    linear-gradient(transparent 2px, rgba(163,15,18,.95) 8px) 356px 0 / 40px 100% no-repeat,
    radial-gradient(circle at 520px 20px, #e8e4cf 0 11px, transparent 18px),
    linear-gradient(transparent 2px, #43c455 7px) 654px 0 / 42px 100% no-repeat,
    radial-gradient(circle at 820px 20px, #6f9fd8 0 6px, #dfe7ef 13px, transparent 20px),
    repeating-linear-gradient(100deg, rgba(20,10,15,.25) 0 20px, rgba(100,80,92,.2) 70px, rgba(30,15,20,.2) 150px),
    linear-gradient(#4d4048, #66565e 60%, #584850);
`;
const TitleText = styled.h1`
  margin: 0; flex: 1; font-size: 14px; font-weight: 400; line-height: 20px; color: #000; text-shadow: 0 0 6px #fff, 0 0 8px #fff;
`;
const WinButtons = styled.div`
  align-self: flex-start; display: grid; grid-template-columns: 36px 32px 59px; height: 21px; margin-right: 3px;
  border: 1px solid rgba(220,210,215,.6); border-top: 0; border-radius: 0 0 5px 5px; overflow: hidden;
`;
const WinButton = styled.button`
  border: 0; border-right: 1px solid rgba(220,210,215,.5); background: rgba(40,28,34,.25); padding: 0; display: grid; place-items: center;
  &:last-child { border-right: 0; }
`;
const MenuBar = styled.nav`
  flex: none; height: 27px; display: flex; align-items: center; gap: 16px; padding: 2px 8px 0; border-bottom: 1px solid #b9bfd0;
  background: linear-gradient(#fff, #eef1fa 32%, #d5dbee 36%, #e2e7f6);
`;
const MenuItem = styled.button`
  border: 0; padding: 0; background: none; color: #9c9ea6; font-size: 14px; line-height: 24px;
`;
const ToolRow = styled.div`
  flex: none; height: 34px; display: flex; border-bottom: 1px solid #b5b5b5; box-shadow: inset 0 1px #fafafa; background: #efefef;
`;
const ToolGroup = styled.div<{ $open?: boolean }>`
  display: flex; align-items: center; padding: 0 2px 0 3px; border-right: 1px solid ${(p) => (p.$open ? 'transparent' : '#bcbcbc')};
`;
const Grip = styled.span`
  width: 4px; height: 28px; margin-right: 4px; background: radial-gradient(circle at 2px 2px, #a5a5a5 1px, transparent 2px) 0 0 / 4px 4px;
`;
const Tool = styled.button<{ $on?: boolean }>`
  width: 31px; height: 28px; padding: 0; display: grid; place-items: center; border: 1px solid transparent; border-radius: 3px; background: none;
  ${(p) => p.$on && css`border-color: #555; background: linear-gradient(#d0d0d0, #eee); box-shadow: inset 0 1px 3px rgba(0,0,0,.4);`}
  &:disabled { filter: grayscale(.85); opacity: .42; }
`;
const ArrowButton = styled.button`
  width: 15px; height: 28px; border: 0; padding: 0; background: none; display: grid; place-items: center;
`;
const VLine = styled.span`width: 1px; height: 24px; margin: 0 3px; background: #c4c4c4;`;

const Caret = ({ c = '#000' }: { c?: string }) => (
  <svg width="9" height="5" viewBox="0 0 9 5" aria-hidden="true"><path d="M0 0h9L4.500 5z" fill={c} /></svg>
);

/* token: "name", "name!" disabled, "name*" pressed, "v"/"V" arrow, "|" divider */
const Tools = ({ groups }: { groups: string[] }) => (
  <ToolRow role="toolbar">
    {groups.map((g, gi) => (
      <ToolGroup key={gi} $open={gi === groups.length - 1}>
        <Grip />
        {g.split(' ').map((t, i) => {
          if (t === '|') return <VLine key={i} />;
          if (t === 'v') return <ArrowButton key={i} aria-label="Mehr"><Caret /></ArrowButton>;
          if (t === 'V') return <ArrowButton key={i} aria-label="Mehr"><Caret c="#666" /></ArrowButton>;
          const name = t.replace(/[!*]/, '');
          return <Tool key={i} aria-label={name} disabled={t.endsWith('!')} $on={t.endsWith('*')}><Icon n={name} /></Tool>;
        })}
      </ToolGroup>
    ))}
  </ToolRow>
);

const Workspace = styled.main`flex: 1; min-height: 0; display: flex;`;
const SideTools = styled.div`
  flex: none; width: 50px; border-right: 1px solid #b5b5b5; border-bottom: 1px solid #b5b5b5; padding: 3px 4px 0; display: flex; flex-direction: column;
`;
const SideGrip = styled.span`height: 4px; margin-bottom: 4px; background: radial-gradient(circle at 2px 2px, #a5a5a5 1px, transparent 2px) 0 0 / 4px 4px;`;
const SideRow = styled.div<{ $shift?: boolean }>`
  height: 30px; display: flex; align-items: center; justify-content: space-between; padding: 0 0 0 ${(p) => (p.$shift ? 8 : 0)}px;
`;
const SideTool = styled.button`width: 26px; height: 28px; border: 0; padding: 0; background: none; display: grid; place-items: center;`;
const SideArrow = styled(SideTool)`width: 12px;`;

const Dock = styled.section<{ $w: number }>`flex: none; width: ${(p) => p.$w}px; display: flex; flex-direction: column; padding-top: 1px;`;
const DockHead = styled.div`
  flex: none; height: 31px; display: flex; align-items: center; gap: 9px; padding: 1px 5px 0 4px; background: #d9d9d9; border: 1px solid #bdbdbd;
`;
const DockTitle = styled.h2`margin: 0; flex: 1; font-size: 14px; font-weight: 400; line-height: 20px;`;
const HeadButton = styled.button`width: 16px; height: 20px; padding: 0; border: 0; background: none; display: grid; place-items: center;`;
const DockTools = styled.div`flex: none; height: 28px; display: flex; align-items: center; gap: 7px; padding: 1px 5px 0;`;
const SmallTool = styled.button`width: 16px; height: 20px; padding: 0; border: 0; background: none; display: grid; place-items: center;`;
const SmallArrow = styled(SmallTool)`width: 9px;`;

const TreeBox = styled.div`
  flex: 1; min-height: 0; display: flex; flex-direction: column; overflow: hidden; background: #fff; border: 1px solid #828790;
`;
const TreeList = styled.ul`list-style: none; margin: 0; padding: 0; flex: 1; min-height: 0; overflow: hidden;`;
const TreeRow = styled.li`
  position: relative; height: 24px; display: grid; align-items: center; grid-template-columns: 28px 23px 25px 1fr;
  &::after { content: ''; position: absolute; right: 1px; top: 2px; width: 4px; height: 20px; background: #e6e6e6; }
`;
const Expander = styled.button`border: 0; padding: 0; height: 20px; background: none; display: grid; place-items: center;`;
const TreeLabel = styled.label<{ $bold?: boolean; $line?: boolean }>`
  font-size: 14px; line-height: 24px; white-space: nowrap;
  font-weight: ${(p) => (p.$bold ? 700 : 400)}; text-decoration: ${(p) => (p.$line ? 'underline' : 'none')};
`;
const ChildRow = styled.li`
  height: 24px; margin-left: 50px; padding-left: 2px; display: grid; align-items: center; grid-template-columns: 21px 26px 1fr;
  border: 1px solid #dcdcdc; border-right: 0; border-radius: 3px 0 0 3px; background: linear-gradient(#fafafa, #e9e9e9);
`;
const Tick = styled.input.attrs({ type: 'checkbox' })`
  appearance: none; position: relative; width: 16px; height: 16px; border: 1px solid #7d8590; background: linear-gradient(135deg, #dadde2, #fff); box-shadow: inset 0 0 0 1px #fff;
  &:checked::after { content: ''; position: absolute; left: 2px; top: 2px; width: 10px; height: 10px; background: #3e4f9c;
    clip-path: polygon(0 50%, 18% 36%, 40% 62%, 82% 0, 100% 6%, 46% 100%, 32% 100%); }
`;
const HScroll = styled.div`flex: none; height: 19px; display: flex; align-items: center; padding: 0 9px 0 7px; gap: 11px; background: #f0f0f0;`;
const Thumb = styled.span<{ $v?: boolean; $w?: number }>`
  border: 1px solid #979797; border-radius: 2px; display: grid; place-items: center;
  ${(p) => (p.$v ? css`width: 18px; height: 207px; background: linear-gradient(90deg, #f5f5f5, #dcdcdc 50%, #c8c8c8);`
    : css`flex: ${p.$w ? `0 0 ${p.$w}px` : '1'}; height: 18px; background: linear-gradient(#f5f5f5, #dcdcdc 50%, #c8c8c8);`)}
`;
const ScrollBtn = styled.button`flex: none; border: 0; padding: 0; background: none; display: grid; place-items: center;`;

const CoordBody = styled.div`
  flex: none; height: 153px; padding: 13px 12px 0 11px; display: grid; align-content: start;
  grid-template-columns: 43px 1fr; grid-template-rows: 24px 24px 26px 27px; row-gap: 8px; align-items: center;
`;
const IconButton = styled.button<{ $flat?: boolean }>`
  width: 25px; height: 25px; padding: 0; display: grid; place-items: center; border-radius: 3px;
  border: 1px solid ${(p) => (p.$flat ? 'transparent' : '#707070')}; background: ${(p) => (p.$flat ? 'none' : 'linear-gradient(#f2f2f2, #d5d5d5)')};
`;
const Field = styled.input`
  width: 100%; height: 22px; padding: 0 4px; border: 1px solid #e2e3e8; border-top-color: #abadb3; border-radius: 2px; background: #fff;
  font-family: ${CTRL}; font-size: 13px; outline: 0;
`;
const Push = styled.button<{ $w?: number; $def?: boolean }>`
  width: ${(p) => (p.$w ? p.$w + 'px' : '100%')}; height: 26px; padding: 0 4px; display: flex; align-items: center; justify-content: center; gap: 8px;
  border: 1px solid #707070; border-radius: 3px; white-space: nowrap;
  background: linear-gradient(#f4f4f4, #ececec 48%, #dcdcdc 52%, #cfcfcf); box-shadow: inset 0 0 0 1px rgba(255,255,255,.8);
  font-family: ${CTRL}; font-size: 13px; color: #000;
  ${(p) => p.$def && css`border-color: #3c7fb1; box-shadow: inset 0 0 0 1px #48c6f0;`}
`;

const MapArea = styled.div`flex: 1; min-width: 0; margin-left: 5px; border: 1px solid #828790; background: #add19e; overflow: hidden;`;

const TREES = [[37, 8], [16, 17], [64, 23], [86, 40], [41, 31], [110, 42], [18, 46], [61, 48], [35, 59], [81, 61], [9, 72], [130, 57], [153, 54], [148, 12], [128, 4], [166, 34], [104, 67], [57, 76], [37, 83], [92, 88], [70, 97], [111, 107], [142, 79], [158, 92], [132, 101], [12, 98]];
const MapDrawing = () => (
  <svg width="100%" height="100%" aria-label="Karte">
    <defs>
      <pattern id="wood" width="172" height="112" patternUnits="userSpaceOnUse">
        {TREES.map(([x, y], i) => (
          <g key={i} transform={`translate(${x - 4} ${y - 3})`} fill="none" stroke="#91bb87" strokeWidth="1">
            <circle cx="2" cy="2" r="1.600" /><path d="M2.500 3.500v4" />
            {i % 2 ? <circle cx="6.500" cy="2" r="1.600" /> : <path d="M6.500 0l-2 4h4z" />}<path d="M6.500 3.500v4" />
          </g>
        ))}
      </pattern>
    </defs>
    <rect width="100%" height="100%" fill="url(#wood)" />
    <g fill="none">
      <path d="M2 138l86 36M-1 268l90-94L171 93" stroke="#d3dfa5" strokeWidth="2" />
      <path d="M2 138l86 36M-1 268l90-94L171 93" stroke="#a9853f" strokeWidth="1.200" strokeDasharray="8 3" />
      <path d="M90 811l24-16c22-10 30-40 38-50l8-30 10-14M114 795l56-34" stroke="#a9d0ce" strokeWidth="4" />
      <path d="M153 718l18-30v18l-12 16z" fill="#9ec6cc" stroke="#6f9aa8" strokeDasharray="1 2" />
      <path d="M171 240l-48 25 16 181L50 611l121 147" stroke="#a0503f" strokeWidth="1.400" />
    </g>
  </svg>
);

const BrowserBody = styled.div`flex: 1; min-height: 0; margin-top: 28px; display: flex; flex-direction: column; border: 1px solid #828790; border-left: 0; background: #fff;`;
const BrowserMain = styled.div`flex: 1; min-height: 0; display: flex;`;
const BrowserList = styled.ul`list-style: none; margin: 0; padding: 1px 0 0; flex: 1; min-width: 0; overflow: hidden;`;
const BrowserRow = styled.li<{ $in: number; $sel?: boolean }>`
  height: 24px; line-height: 24px; padding-left: ${(p) => p.$in}px; white-space: nowrap; font-size: 14px; display: flex; align-items: center; gap: 6px;
  ${(p) => p.$sel && css`background: linear-gradient(#f8f8f8, #e8e8e8); border: solid #dcdcdc; border-width: 1px 0;`}
`;
const VScroll = styled.div`flex: none; width: 20px; display: flex; flex-direction: column; align-items: center; background: #f0f0f0; padding: 8px 0;`;
const VGap = styled.span<{ $h?: number }>`${(p) => (p.$h ? `height: ${p.$h}px; flex: none;` : 'flex: 1;')}`;
const PathMark = styled.span`width: 5px; height: 10px; border: 1px solid #555; border-left: 0; border-radius: 0 5px 5px 0;`;

const StatusBar = styled.footer`
  flex: none; height: 32px; display: flex; align-items: center; padding: 2px 4px 0; font-family: ${CTRL}; font-size: 13px;
`;
const SearchBox = styled.label<{ $w?: number; $fixed?: boolean; $wide?: boolean }>`
  display: flex; align-items: center; gap: 8px; height: 22px; padding: ${(p) => (p.$wide ? '0 6px 0 11px' : '0 8px')};
  ${(p) => (p.$w ? `width: ${p.$w}px;` : p.$fixed ? 'flex: none;' : 'flex: 1;')}
  background: #fff; border: 1px solid #e2e3e8; border-top-color: #abadb3; border-radius: 2px;
`;
const BareInput = styled.input`
  flex: 1; min-width: 0; width: 100%; border: 0; outline: 0; padding: 0; background: none; font-family: ${CTRL}; font-size: 13px; line-height: 18px;
  &::placeholder { color: #777; opacity: 1; }
`;
const StatusRight = styled.div`margin-left: auto; display: flex; align-items: center; gap: 5px;`;
const StatusText = styled.label`white-space: nowrap;`;
const StatusField = styled.div<{ $w: number }>`width: ${(p) => p.$w}px; height: 22px; display: flex; align-items: center; padding: 0 2px; background: #fff; border: 1px solid #e2e3e8; border-top-color: #abadb3;`;
const Slot = styled.span<{ $w: number }>`flex: none; width: ${(p) => p.$w}px; display: grid; place-items: center;`;

/* ---------- dialog ---------- */
const Dialog = styled.section`
  position: absolute; left: 477px; right: 157px; top: 143px; bottom: 20px; display: flex; flex-direction: column; padding: 0 7px 7px 6px;
  border: 1px solid #1d1d1d; border-radius: 7px; box-shadow: inset 0 0 0 1px #d8d8d8, 0 2px 14px 4px rgba(0,0,0,.6);
  background: linear-gradient(#a4a4a4, #9c9c9c 36px, #b4b8b2 120px, #dde0dc 238px, #7f8a7d 240px, #8b9789 500px, #848d83 96%, #9a9a9a 98%);
`;
const DialogTitle = styled.header`
  flex: none; height: 33px; margin: 1px -6px 0 -5px; padding-left: 7px; display: flex; align-items: center; gap: 5px; border-radius: 6px 6px 0 0;
  background: radial-gradient(ellipse 260px 22px at 180px 18px, rgba(255,255,255,.6), rgba(255,255,255,.4) 60%, transparent),
    linear-gradient(115deg, transparent 55%, rgba(60,60,60,.3) 57%, transparent 62%, transparent 66%, rgba(60,60,60,.25) 74%, transparent 82%),
    linear-gradient(#8f8f8f, #a2a2a2);
`;
const CloseButton = styled.button`
  align-self: flex-start; width: 59px; height: 24px; margin-right: 6px; padding: 0; border: 1px solid #5d211a; border-top: 0; border-radius: 0 0 5px 5px;
  box-shadow: inset 0 0 0 1px rgba(255,255,255,.5); display: grid; place-items: center; background: linear-gradient(#e6a79c, #d4705f 48%, #b8331d 52%, #cf5a3a);
`;
const DialogBody = styled.div`flex: 1; min-height: 0; display: flex; background: #efefef; border: 1px solid #444; box-shadow: 0 0 0 1px #d5d5d5;`;
const Sidebar = styled.div`flex: none; width: 213px; background: #5b5b5b; display: flex; flex-direction: column;`;
const PageList = styled.nav`display: flex; flex-direction: column; padding-top: 7px;`;
const PageItem = styled.button<{ $on?: boolean }>`
  height: 38px; border: 0; display: flex; align-items: center; gap: 8px; text-align: left; font-size: 14px; line-height: 20px;
  padding: 0 0 0 ${(p) => (p.$on ? 8 : 5)}px; color: ${(p) => (p.$on ? '#111' : '#f2f2f2')}; background: ${(p) => (p.$on ? '#efefef' : 'none')};
`;
const Pane = styled.div`flex: 1; min-width: 0; display: flex; flex-direction: column; padding: 3px 3px 4px 6px; font-family: ${CTRL}; font-size: 13px; color: #000;`;
const SelectWrap = styled.div<{ $h: number }>`
  position: relative; flex: 1; display: flex; align-items: center; height: ${(p) => p.$h}px; border: 1px solid #707070; border-radius: 3px;
  background: linear-gradient(#f4f4f4, #ebebeb 46%, #dbdbdb 50%, #cdcdcd); box-shadow: inset 0 0 0 1px rgba(255,255,255,.7);
  > svg:last-child { position: absolute; right: 6px; pointer-events: none; }
  > svg:first-child { margin-left: 6px; }
`;
const Select = styled.select`
  appearance: none; flex: 1; height: 100%; border: 0; background: none; padding: 0 20px 0 3px; font-family: ${CTRL}; font-size: 13px; outline: 0;
`;
const SymbolArea = styled.div`flex: none; margin-top: 7px; height: 168px; display: grid; grid-template-columns: 175px 1fr 72px; gap: 0 8px;`;
const Preview = styled.div`display: grid; place-items: center start; padding: 0 0 0 34px;`;
const PreviewLine = styled.span`width: 100px; height: 9px; margin-top: 1px; background: #000;`;
const SymbolTree = styled.ul`list-style: none; margin: 0 0 0 -8px; padding: 0 1px; background: #fff; border: 1px solid #828790; font-family: ${UI}; font-size: 14px;`;
const SymbolRoot = styled.li`display: grid; grid-template-columns: 24px 1fr; height: 24px; align-items: center;`;
const SymbolLine = styled.span<{ $sel?: boolean }>`
  display: flex; align-items: center; gap: 6px; height: 24px; padding-left: 2px; border-radius: 3px; font-weight: ${(p) => (p.$sel ? 700 : 400)};
  ${(p) => p.$sel && css`border: 1px solid #dcdcdc; background: linear-gradient(#fafafa, #e9e9e9);`}
`;
const SymbolChild = styled.li`padding-left: 50px;`;
const Swatch = styled.span<{ $c: string }>`width: 17px; height: 9px; background: ${(p) => p.$c};`;
const SymbolButtons = styled.div`display: grid; grid-template-columns: 31px 31px; gap: 11px 9px; align-content: start; padding-top: 6px;`;
const SquareButton = styled.button`
  width: 31px; height: 27px; padding: 0; display: grid; place-items: center; border: 1px solid #707070; border-radius: 3px; background: linear-gradient(#f6f6f6, #d4d4d4);
  &:disabled { border-color: #b4b4b4; background: #f3f3f3; } &:disabled svg { opacity: .6; }
`;
const Rule = styled.hr<{ $top: number; $in?: boolean }>`
  flex: none; width: auto; margin: ${(p) => p.$top}px ${(p) => (p.$in ? 11 : 0)}px 0 0; border: 0; height: 2px; background: #fff; border-top: 1px solid #a0a0a0;
`;
const Line = styled.div<{ $h: number; $top?: number; $full?: boolean }>`
  flex: none; display: flex; align-items: center; height: ${(p) => p.$h}px; margin-top: ${(p) => p.$top || 0}px; margin-right: ${(p) => (p.$full ? 0 : 11)}px;
`;
const LineLabel = styled.label<{ $w: number }>`flex: none; position: relative; z-index: 1; width: ${(p) => p.$w}px; white-space: nowrap;`;
const Range = styled.input.attrs({ type: 'range' })`
  appearance: none; flex: 1; height: 18px; margin: 0 4px 0 0; background: linear-gradient(#b5b5b5, #b5b5b5) 0 7px / 100% 1px no-repeat, linear-gradient(#fff, #fff) 0 8px / 100% 2px no-repeat;
  &::-webkit-slider-thumb { appearance: none; width: 12px; height: 18px; border: 1px solid #707070; border-radius: 2px; background: linear-gradient(#f8f8f8, #d2d2d2); }
`;
const SpinBox = styled.div<{ $w?: number; $h: number }>`
  ${(p) => (p.$w ? `width: ${p.$w}px;` : 'flex: 1;')} height: ${(p) => p.$h}px; display: flex; align-items: center; padding: 0 1px 0 2px;
  background: #fff; border: 1px solid #e2e3e8; border-top-color: #abadb3;
`;
const SpinButtons = styled.span`display: grid; width: 13px; height: 18px; border: 1px solid #b5b9c6; background: #f5f5f8;`;
const SpinButton = styled.button`border: 0; padding: 0; background: none; display: grid; place-items: center; height: 8px; & + & { border-top: 1px solid #b5b9c6; }`;
const Spin = () => (
  <SpinButtons>
    <SpinButton aria-label="Erhöhen"><svg width="7" height="4"><path d="M0 4h7L3.500 0z" fill="#4c5c9c" /></svg></SpinButton>
    <SpinButton aria-label="Verringern"><svg width="7" height="4"><path d="M0 0h7L3.500 4z" fill="#4c5c9c" /></svg></SpinButton>
  </SpinButtons>
);
const ColorButton = styled.button`
  flex: 1; height: 24px; padding: 1px 0 1px 3px; display: flex; gap: 2px; border: 1px solid #707070; border-radius: 3px; background: linear-gradient(#f4f4f4, #d4d4d4);
`;
const ColorFill = styled.span`flex: 1; height: 20px; border-radius: 3px; background: #000;`;
const ColorArrow = styled.span`width: 15px; height: 20px; display: grid; place-items: center; border-left: 1px solid #a5a5a5;`;
const GhostButton = styled.button<{ $w: number; $end?: boolean }>`
  width: ${(p) => p.$w}px; height: 22px; border: 0; padding: 0; background: none; display: grid; place-items: center ${(p) => (p.$end ? 'end' : 'center')};
  ${(p) => p.$end && 'padding-right: 6px;'}
`;
const Gallery = styled.div`
  flex: 1; min-height: 0; margin: 7px 11px 0 0; padding: 6px 7px; overflow: hidden; background: #fff; border: 1px solid #828790;
  display: grid; grid-template-columns: repeat(7, 125px); grid-auto-rows: 132px; gap: 6px; align-content: start;
`;
const Sample = styled.button<{ $on?: boolean }>`
  border: 1px solid ${(p) => (p.$on ? '#d9d9d9' : 'transparent')}; border-radius: 3px; padding: 0; background: ${(p) => (p.$on ? 'linear-gradient(#fafafa, #e4e4e4)' : 'none')};
  display: flex; flex-direction: column; align-items: center; justify-content: space-between; font-family: ${UI}; font-size: 14px; line-height: 18px; white-space: pre; color: #111;
`;
const ViewRow = styled.div`flex: none; height: 25px; margin: 8px 11px 0 0; display: flex; align-items: center;`;
const ViewToggle = styled.button`width: 27px; height: 24px; padding: 0; display: grid; place-items: center; border: 1px solid #444; border-radius: 3px; background: linear-gradient(#c9c9c9, #e9e9e9);`;
const ViewName = styled.span`flex: 1; padding-left: 7px;`;
const Gap = styled.span<{ $w: number }>`width: ${(p) => p.$w}px; flex: none;`;
const LayerHead = styled.button`
  flex: none; height: 26px; margin: 22px 0 8px; border: 0; background: none; padding: 0 5px; display: flex; align-items: center; gap: 10px; font-family: ${CTRL}; font-size: 13px; font-weight: 700;
`;
const Buttons = styled.div`flex: none; display: flex; gap: 10px; padding: 0 2px 0 1px;`;
const Grow = styled.span`flex: 1;`;

const SolidLine = ({ c }: { c: string }) => <path d="M20 54h85" stroke={c} strokeWidth="3" />;
const DashLine = ({ c }: { c: string }) => <path d="M21 54h80" stroke={c} strokeWidth="3.500" strokeLinecap="round" strokeDasharray="3 9.500" />;
const SAMPLES: [string, ReactNode][] = [
  ['dash  black', <DashLine c="#000" />],
  ['dash blue', <DashLine c="#4f7db0" />],
  ['dash green', <DashLine c="#5ba35b" />],
  ['dash red', <DashLine c="#b02a3a" />],
  ['effect emboss', <g><defs><linearGradient id="emb" x2=".3" y2="1"><stop offset="0" stopColor="#2b1c1c" /><stop offset=".7" stopColor="#8f6b6b" /><stop offset="1" stopColor="#9a7474" /></linearGradient></defs><rect x="12" y="45" width="101" height="18" rx="9" fill="url(#emb)" stroke="#000" strokeWidth="1.400" /></g>],
  ['effect neon', <g><defs><filter id="glow" x="-20%" y="-200%" width="140%" height="500%"><feGaussianBlur stdDeviation="3.500" /></filter></defs><rect x="13" y="44" width="99" height="20" rx="9" fill="#f88" opacity=".8" filter="url(#glow)" /><rect x="17" y="50" width="91" height="9" rx="4" fill="#cc1417" /></g>],
  ['pattern circles', <g fill="#fff" stroke="#000" strokeWidth="1.800"><path d="M20 54h85" strokeWidth="3" />{[22, 50, 78].map((x) => <g key={x}><circle cx={x} cy="45" r="5" /><circle cx={x} cy="63" r="5" /></g>)}</g>],
  ['simple blue line', <SolidLine c="#4182c0" />],
  ['simple green line', <SolidLine c="#5aa854" />],
  ['simple red line', <SolidLine c="#bc2031" />],
  ['topo main road', <rect x="17" y="50" width="91" height="9" rx="4" fill="#ff6a13" stroke="#111" strokeWidth="1.200" />],
  ['topo railway', <path d="M20 54h84M21 48v12M35 48v12M49 48v12M63 48v12M77 48v12M92 48v12" stroke="#222" strokeWidth="1.400" />],
  ['topo road', <rect x="19" y="52" width="87" height="4" rx="2" fill="#fff" stroke="#777" />],
];

const PAGES: [string, string][] = [
  ['info', 'Information'], ['source', 'Quelle'], ['symb', 'Symbolisierung'], ['labels', 'Beschriftungen'], ['diagram', 'Diagramme'],
  ['cube', '3D-Ansicht'], ['fields', 'Felder'], ['aform', 'Attributformular'], ['join', 'Verknüpfungen'], ['aux', 'Hilfsspeicher'],
  ['actions', 'Aktionen'], ['tip', 'Anzeigen'], ['brush', 'Darstellung'], ['eps', 'Variablen'], ['meta', 'Metadaten'],
  ['deps', 'Abhängigkeiten'], ['legend', 'Legende'], ['server', 'QGIS Server'], ['digit', 'Digitalisieren'],
];

/* ---------- annotations ---------- */
const Note = styled.div<{ $x: number; $y: number; $w: number; $h: number; $big?: boolean }>`
  position: absolute; left: ${(p) => p.$x}px; top: ${(p) => p.$y}px; width: ${(p) => p.$w}px; height: ${(p) => p.$h}px; padding: 0 4px 3px 0;
  display: grid; place-items: center; border: 2px solid #000; background: #ff0; color: #000; font-family: ${NOTE}; font-weight: 700; font-size: ${(p) => (p.$big ? 20 : 16)}px;
`;
const Overlay = styled.svg`position: absolute; inset: 0; pointer-events: none;`;

const MENUS = ['Projekt', 'Bearbeiten', 'Ansicht', 'Layer', 'Einstellungen', 'Erweiterungen', 'Vektor', 'Raster', 'Datenbank', 'Web', 'Netz', 'Verarbeitung', 'Hilfe'];
const SIDE: [string, boolean][] = [['addv', false], ['addr', false], ['addmesh', false], ['addcsv', false], ['addspat', false], ['addvirt', false], ['addpg', true], ['addwms', true], ['addwcs', false], ['addwfs', true], ['newshape', true]];
const LAYERS = ['Rundweg', 'NSG', 'Bannwald_alt', 'Heidewald', 'Misse', 'Moorkern1', 'Moorkern2', 'Moorkern3', 'Moorkern4', 'Moorwald', 'Tannenwald'];
const BROWSER: [number, string][] = [
  [6, 'Pilzfreunde'], [8, 'Biotope - Docs'], [1, 'mporte'], [5, '- WMS-Dienste'], [0, 'ns-Beiträge'], [0, ''], [4, 'ackage'], [7, 'f_export'], [4, 'xporte'], [4, 'mporte'], [6, 'T'],
  [5, '*Bannwald_alt.gpx'], [5, '*Heidewald.gpx'], [5, '*Misse.gpx'], [5, '*Moorkern1.gpx'], [5, '*Moorkern2.gpx'], [5, '*Moorkern3.gpx'], [5, '*Moorkern4.gpx'],
  [5, '*Moorwald.gpx'], [5, '*NSG.gpx'], [5, '*Rundweg.gpx'], [5, '*Strasse.gpx'], [5, '*Tannenwald.gpx'],
  [3, 'R - Altholz + Funde 2'], [3, 'R - Altholz + Funde 2'], [4, 'nport'], [4, 'xporte'], [5, 'ls'], [5, 'georeferenzierte Kart'], [5, 'e-Karten'], [9, 'fotos wie'],
];

const HeadIcons = () => (<><HeadButton aria-label="Lösen"><Icon n="undock" s={17} /></HeadButton><HeadButton aria-label="Schließen"><Icon n="close" s={16} /></HeadButton></>);
const Closed = () => <svg width="7" height="11"><path d="M1 1l5 4.500-5 4.500z" fill="#fff" stroke="#999" /></svg>;
const Opened = () => <svg width="8" height="8"><path d="M8 0v8H0z" fill="#333" /></svg>;

export default function App() {
  return (
    <Shell>
      <Global />
      <TitleBar>
        <Icon n="qgis" s={20} />
        <TitleText>*QGIS für Pilzfreunde 23 - QGIS</TitleText>
        <WinButtons>
          <WinButton aria-label="Minimieren"><svg width="16" height="16"><rect x="1" y="11" width="14" height="4" fill="#fff" stroke="#333" strokeWidth=".6" /></svg></WinButton>
          <WinButton aria-label="Verkleinern"><svg width="16" height="16"><path d="M5 4V1h10v10h-3" fill="none" stroke="#fff" strokeWidth="2" /><rect x="2" y="5" width="9" height="9" fill="none" stroke="#fff" strokeWidth="3" /></svg></WinButton>
          <WinButton aria-label="Beenden"><svg width="14" height="13"><path d="M1 0h4l2 4 2-4h4L9 6l4 7H9L7 9l-2 4H1l4-7z" fill="#fff" /></svg></WinButton>
        </WinButtons>
      </TitleBar>
      <MenuBar>{MENUS.map((m) => <MenuItem key={m}>{m}</MenuItem>)}</MenuBar>
      <Tools groups={['new open save layout manager style', 'hand* pan zin zout zfull zsel zlayer z11! zlast znext! newmap bookmark bookmarks refresh', 'identify action! V select v form v deselect table abacus gear sigma ruler v tips* text v']} />
      <Tools groups={['dsm geopkg newshape newspat mem | virt', 'pencils! pencil! save! vplus! vtool! V multi! trash! cut! copy! paste! undo! redo!', 'label diagram | pinlabel redlabel | gl1! gl2! gl3! gl4! gl5!', 'plug hd photo db', 'globeplus globesearch globebin', 'python kml html rasterplus tiles gridnew', 'book', 'cross*']} />
      <Tools groups={['tri! vmove! V b1! b2! b3! b4! b5! b6! b7! b8! b9! b10! b11! b12! b13! b14! b15! b16! V']} />
      <Tools groups={['osm1 osm2', 'cam snap']} />

      <Workspace>
        <SideTools>
          <SideGrip />
          <div>
            {SIDE.map(([n, a]) => (
              <SideRow key={n}><SideTool aria-label={n}><Icon n={n} /></SideTool>{a && <SideArrow aria-label="Mehr"><Caret /></SideArrow>}</SideRow>
            ))}
            <SideRow $shift><SideTool aria-label="Tabelle"><Icon n="addtab" /></SideTool></SideRow>
          </div>
        </SideTools>

        <Dock $w={251}>
          <DockHead><DockTitle>Layer</DockTitle><HeadIcons /></DockHead>
          <DockTools>
            {['brush2', 'group', 'eye', 'filter', 'expr'].map((n) => <SmallTool key={n} aria-label={n}><Icon n={n} s={16} /></SmallTool>)}
            <SmallArrow aria-label="Mehr"><Caret /></SmallArrow>
            {['exp', 'col', 'remove'].map((n) => <SmallTool key={n} aria-label={n}><Icon n={n} s={16} /></SmallTool>)}
          </DockTools>
          <TreeBox>
            <TreeList>
              <TreeRow><Expander aria-label="Zuklappen"><Opened /></Expander><Tick id="l-strasse" defaultChecked /><Icon n="grp" s={17} /><TreeLabel htmlFor="l-strasse">Strasse</TreeLabel></TreeRow>
              <ChildRow>
                <Tick id="l-tracks" defaultChecked />
                <svg width="20" height="4"><path d="M0 2h5M12 2h6" stroke="#1b2f4f" strokeWidth="3" /></svg>
                <TreeLabel htmlFor="l-tracks" $bold $line>Strasse tracks</TreeLabel>
              </ChildRow>
              {LAYERS.map((l) => (
                <TreeRow key={l}><Expander aria-label="Aufklappen"><Closed /></Expander><Tick id={'l-' + l} defaultChecked /><Icon n="grp" s={17} /><TreeLabel htmlFor={'l-' + l}>{l}</TreeLabel></TreeRow>
              ))}
              <TreeRow><Expander aria-label="Zuklappen"><Opened /></Expander><Tick id="l-osm" defaultChecked /><Icon n="osm" s={19} /><TreeLabel htmlFor="l-osm" $bold>OpenStreetMap Standard</TreeLabel></TreeRow>
            </TreeList>
            <HScroll>
              <ScrollBtn aria-label="Links"><svg width="5" height="9"><path d="M5 0v9L0 4.500z" fill="#333" /></svg></ScrollBtn>
              <Thumb><svg width="10" height="9"><path d="M1 0v9M5 0v9M9 0v9" stroke="#555" /></svg></Thumb>
              <ScrollBtn aria-label="Rechts"><svg width="5" height="9"><path d="M0 0v9l5-4.500z" fill="#333" /></svg></ScrollBtn>
            </HScroll>
          </TreeBox>
          <VGap $h={7} />
          <DockHead><DockTitle>Koordinatenaufnahme</DockTitle><HeadIcons /></DockHead>
          <CoordBody>
            <IconButton aria-label="KBS wählen"><Icon n="globe1" s={20} /></IconButton><Field aria-label="Geografische Koordinate" />
            <IconButton $flat aria-label="Kartenkoordinate"><Icon n="grid" s={20} /></IconButton><Field aria-label="Kartenkoordinate" />
            <IconButton aria-label="Mausverfolgung"><Icon n="mouse" s={20} /></IconButton><Push>In Zwischenablage kopieren</Push>
            <span /><Push><Icon n="cross" s={18} />Aufnahme starten</Push>
          </CoordBody>
        </Dock>

        <MapArea><MapDrawing /></MapArea>

        <Dock $w={163}>
          <DockHead><DockTitle /><HeadIcons /></DockHead>
          <BrowserBody>
            <BrowserMain>
              <BrowserList>
                {BROWSER.map(([ind, t], i) => (
                  <BrowserRow key={i} $in={ind} $sel={i === 1}>{t[0] === '*' && <PathMark />}{t.replace('*', '')}</BrowserRow>
                ))}
              </BrowserList>
              <VScroll>
                <ScrollBtn aria-label="Hoch"><svg width="9" height="5"><path d="M0 5h9L4.500 0z" fill="#333" /></svg></ScrollBtn>
                <VGap $h={93} />
                <Thumb $v><svg width="9" height="10"><path d="M0 1h9M0 5h9M0 9h9" stroke="#555" /></svg></Thumb>
                <VGap />
                <ScrollBtn aria-label="Runter"><svg width="9" height="5"><path d="M0 0h9L4.500 5z" fill="#333" /></svg></ScrollBtn>
              </VScroll>
            </BrowserMain>
            <HScroll>
              <Thumb $w={22} />
              <VGap />
              <ScrollBtn aria-label="Rechts"><svg width="5" height="9"><path d="M0 0v9l5-4.500z" fill="#333" /></svg></ScrollBtn>
              <Gap $w={8} />
            </HScroll>
          </BrowserBody>
        </Dock>
      </Workspace>

      <StatusBar>
        <SearchBox $w={279}><Icon n="search" s={12} /><BareInput placeholder="Zu suchender Typ (Strg+K)" aria-label="Suche" /></SearchBox>
        <StatusRight>
          <StatusText htmlFor="st-k">Koordinate</StatusText>
          <StatusField $w={109}><BareInput id="st-k" defaultValue="961321,6229860" /></StatusField>
          <Slot $w={24}><Icon n="mouse" s={18} /></Slot>
          <StatusText htmlFor="st-m">Maßstab</StatusText>
          <StatusField $w={88}><BareInput id="st-m" defaultValue="1:7418" /><Caret /><Gap $w={4} /></StatusField>
          <Slot $w={26}><Icon n="padlock" s={15} /></Slot>
          <StatusText htmlFor="st-v">Vergrößerung</StatusText>
          <StatusField $w={86}><BareInput id="st-v" defaultValue="100%" /><Spin /></StatusField>
          <StatusText htmlFor="st-d">Drehung</StatusText>
          <StatusField $w={84}><BareInput id="st-d" defaultValue="0,0 °" /><Spin /></StatusField>
          <Gap $w={1} />
          <Tick id="st-z" defaultChecked /><StatusText htmlFor="st-z">Zeichnen</StatusText>
          <Slot $w={24}><Icon n="globe2" s={18} /></Slot>
          <StatusText as="span">EPSG:3857</StatusText>
          <Slot $w={38}><Icon n="chat" s={20} /></Slot>
          <Slot $w={20}><Icon n="puzzle" s={21} /></Slot>
        </StatusRight>
      </StatusBar>

      <Dialog role="dialog" aria-label="Layereigenschaften">
        <DialogTitle>
          <Icon n="qgis" s={20} />
          <TitleText as="h2">Layereigenschaften - Strasse tracks | Symbolisierung</TitleText>
          <CloseButton aria-label="Schließen"><svg width="14" height="13"><path d="M1 0h4l2 4 2-4h4L9 6l4 7H9L7 9l-2 4H1l4-7z" fill="#fff" stroke="#444" strokeWidth=".7" /></svg></CloseButton>
        </DialogTitle>
        <DialogBody>
          <Sidebar>
            <SearchBox $fixed><Icon n="search" s={12} /><BareInput aria-label="Seiten durchsuchen" /></SearchBox>
            <PageList>
              {PAGES.map(([n, t]) => <PageItem key={t} $on={n === 'symb'}><Icon n={n} />{t}</PageItem>)}
            </PageList>
          </Sidebar>
          <Pane>
            <Line $h={26} $full>
              <SelectWrap $h={26}><Icon n="single" s={18} /><Select aria-label="Darstellungsart"><option>Einzelsymbol</option></Select><Caret /></SelectWrap>
            </Line>
            <SymbolArea>
              <Preview><PreviewLine /></Preview>
              <SymbolTree>
                <SymbolRoot><Expander aria-label="Zuklappen"><Opened /></Expander><SymbolLine $sel><Swatch $c="#12315a" />Linie</SymbolLine></SymbolRoot>
                <SymbolChild><SymbolLine><Swatch $c="#000" />Einfache Linie</SymbolLine></SymbolChild>
              </SymbolTree>
              <SymbolButtons>
                <SquareButton aria-label="Hinzufügen"><Icon n="plusbig" s={18} /></SquareButton>
                <SquareButton disabled aria-label="Nach oben"><Icon n="up" s={16} /></SquareButton>
                <SquareButton disabled aria-label="Entfernen"><Icon n="minus" s={16} /></SquareButton>
                <SquareButton disabled aria-label="Nach unten"><Icon n="down" s={16} /></SquareButton>
                <SquareButton disabled aria-label="Duplizieren"><Icon n="dup" s={18} /></SquareButton>
                <SquareButton disabled aria-label="Sperren"><Icon n="lock" s={17} /></SquareButton>
              </SymbolButtons>
            </SymbolArea>
            <Rule $top={7} />
            <Line $h={22} $top={8}>
              <LineLabel $w={53} htmlFor="unit">Einheit</LineLabel>
              <SelectWrap $h={22}><Select id="unit"><option>Millimeter</option></Select><Caret /></SelectWrap>
            </Line>
            <Line $h={20}>
              <LineLabel $w={53} htmlFor="opac">Deckkraft</LineLabel>
              <Range id="opac" defaultValue={100} />
              <SpinBox $w={100} $h={20}><BareInput aria-label="Deckkraft in Prozent" defaultValue="100,0 %" /><Spin /></SpinBox>
            </Line>
            <Line $h={24} $top={1}>
              <LineLabel $w={54} as="span">Farbe</LineLabel>
              <ColorButton aria-label="Farbe"><ColorFill /><ColorArrow><Caret /></ColorArrow></ColorButton>
            </Line>
            <Line $h={22} $top={24}>
              <LineLabel $w={40} htmlFor="width">Breite</LineLabel>
              <SpinBox $h={22}><BareInput id="width" defaultValue="1,66000" /><Spin /></SpinBox>
              <Gap $w={8} />
              <GhostButton $w={32} aria-label="Datendefiniert"><Icon n="data" s={21} /></GhostButton>
            </Line>
            <Rule $top={27} $in />
            <Line $h={22} $top={7}>
              <SearchBox as="div" $wide><Icon n="search" s={12} /><BareInput aria-label="Symbole filtern" defaultValue="Favoriten" /><Icon n="clear" s={13} /><Gap $w={0} /><Caret /></SearchBox>
              <GhostButton $w={34} $end aria-label="Stilverwaltung"><Icon n="style" s={18} /></GhostButton>
            </Line>
            <Gallery>
              {SAMPLES.map(([name, art]) => (
                <Sample key={name} $on={name === 'simple blue line'}><svg width="123" height="108" viewBox="1 0 123 108" aria-hidden="true">{art}</svg>{name}</Sample>
              ))}
            </Gallery>
            <ViewRow>
              <ViewToggle aria-label="Symbolansicht"><Icon n="tilesv" s={17} /></ViewToggle>
              <GhostButton $w={26} aria-label="Listenansicht"><Icon n="table" s={19} /></GhostButton>
              <ViewName>simple blue line</ViewName>
              <Push $w={119}>Symbol speichern...</Push><Gap $w={8} /><Push $w={92}>Erweitert<Gap $w={1} /><Caret /></Push>
            </ViewRow>
            <LayerHead><svg width="7" height="12"><path d="M0 0l7 6-7 6z" fill="#333" /></svg>Layerdarstellung</LayerHead>
            <Buttons>
              <Push $w={90}><Gap $w={8} />Stil<Gap $w={14} /><Caret /></Push>
              <Grow />
              <Push $w={90} $def>OK</Push><Push $w={90}>Abbrechen</Push><Push $w={90}>Anwenden</Push><Push $w={90}>Hilfe</Push>
            </Buttons>
          </Pane>
        </DialogBody>
      </Dialog>

      <Note $x={347} $y={266} $w={43} $h={42}>1.</Note>
      <Note $x={634} $y={454} $w={43} $h={42}>2.</Note>
      <Note $x={1383} $y={859} $w={43} $h={42}>4.</Note>
      <Note $x={1579} $y={859} $w={43} $h={42}>3.</Note>
      <Note $x={985} $y={923} $w={99} $h={47} $big>Bild 5</Note>
      <Overlay width="100%" height="100%" aria-hidden="true">
        <g stroke="#f00" strokeWidth="3" fill="none"><path d="M347 286H275M1404 903v52M1599 901v54" /></g>
        <path d="M256 286l27-6-6 6 6 7zM1404 972l-7-26 7 5 7-5zM1599 971l-7-26 7 5 7-5z" fill="#f00" />
        <g fill="none" stroke="#e01010" strokeWidth="1.500"><ellipse cx="746" cy="453" rx="63" ry="20" /><ellipse cx="749" cy="502" rx="63" ry="20" /></g>
        <path d="M411 257v16l4-3 3 6 2-1-3-6h5z" fill="#fff" stroke="#222" />
      </Overlay>
    </Shell>
  );
}
